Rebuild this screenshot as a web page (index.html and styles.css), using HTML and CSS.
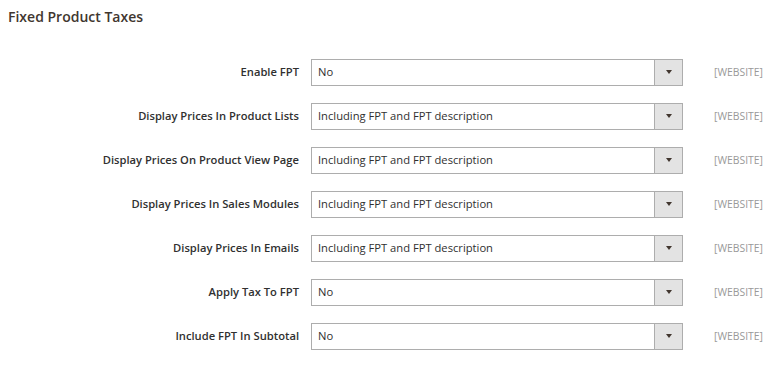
FILE: index.html
```html
<!DOCTYPE html>
<html lang="en">
<head>
    <meta charset="UTF-8">
    <meta name="viewport" content="width=device-width, initial-scale=1.0">
    <title>Fixed Product Taxes</title>
    <link rel="stylesheet" href="styles.css">
</head>
<body>
    <section class="config-section">
        <h2 class="section-title">Fixed Product Taxes</h2>

        <div class="config-form">
            <div class="field-row">
                <label class="field-label">Enable FPT</label>
                <div class="select-box">
                    <span class="select-value">No</span>
                    <span class="select-arrow"></span>
                </div>
                <span class="scope">[WEBSITE]</span>
            </div>

            <div class="field-row">
                <label class="field-label">Display Prices In Product Lists</label>
                <div class="select-box">
                    <span class="select-value">Including FPT and FPT description</span>
                    <span class="select-arrow"></span>
                </div>
                <span class="scope">[WEBSITE]</span>
            </div>

            <div class="field-row">
                <label class="field-label">Display Prices On Product View Page</label>
                <div class="select-box">
                    <span class="select-value">Including FPT and FPT description</span>
                    <span class="select-arrow"></span>
                </div>
                <span class="scope">[WEBSITE]</span>
            </div>

            <div class="field-row">
                <label class="field-label">Display Prices In Sales Modules</label>
                <div class="select-box">
                    <span class="select-value">Including FPT and FPT description</span>
                    <span class="select-arrow"></span>
                </div>
                <span class="scope">[WEBSITE]</span>
            </div>

            <div class="field-row">
                <label class="field-label">Display Prices In Emails</label>
                <div class="select-box">
                    <span class="select-value">Including FPT and FPT description</span>
                    <span class="select-arrow"></span>
                </div>
                <span class="scope">[WEBSITE]</span>
            </div>

            <div class="field-row">
                <label class="field-label">Apply Tax To FPT</label>
                <div class="select-box">
                    <span class="select-value">No</span>
                    <span class="select-arrow"></span>
                </div>
                <span class="scope">[WEBSITE]</span>
            </div>

            <div class="field-row">
                <label class="field-label">Include FPT In Subtotal</label>
                <div class="select-box">
                    <span class="select-value">No</span>
                    <span class="select-arrow"></span>
                </div>
                <span class="scope">[WEBSITE]</span>
            </div>
        </div>
    </section>
</body>
</html>
```

FILE: styles.css
```css
/* Global Styles */
body {
    font-family: 'Open Sans', sans-serif;
    margin: 0;
    padding: 0;
    background-color: #FFFFFF;
    color: #303030;
}

.config-section {
    padding: 7px 0 0 8px;
}

.section-title {
    margin: 0;
    font-size: 14px;
    font-weight: 600;
    line-height: 20px;
    color: #41362F;
}

.config-form {
    display: flex;
    flex-direction: column;
    margin-top: 23px;
}

.field-row {
    display: grid;
    grid-template-columns: 291px 372px auto;
    column-gap: 12px;
    align-items: center;
    height: 44px;
}

.field-label {
    text-align: right;
    font-size: 11.2px;
    font-weight: 600;
    color: #303030;
    padding-bottom: 1px;
}

.select-box {
    display: flex;
    align-items: stretch;
    height: 27px;
    border: 1px solid #ADADAD;
    box-sizing: border-box;
    background-color: #FFFFFF;
}

.select-value {
    flex: 1;
    display: flex;
    align-items: center;
    padding: 0 0 1px 6px;
    font-size: 11.2px;
    color: #303030;
}

.select-arrow {
    width: 27px;
    border-left: 1px solid #ADADAD;
    background-color: #E3E3E3;
    display: flex;
    align-items: center;
    justify-content: center;
}

.select-arrow::after {
    content: "";
    border-left: 3px solid transparent;
    border-right: 3px solid transparent;
    border-top: 4px solid #41362F;
}

.scope {
    padding-left: 19px;
    font-size: 10.4px;
    color: #999999;
}
```
